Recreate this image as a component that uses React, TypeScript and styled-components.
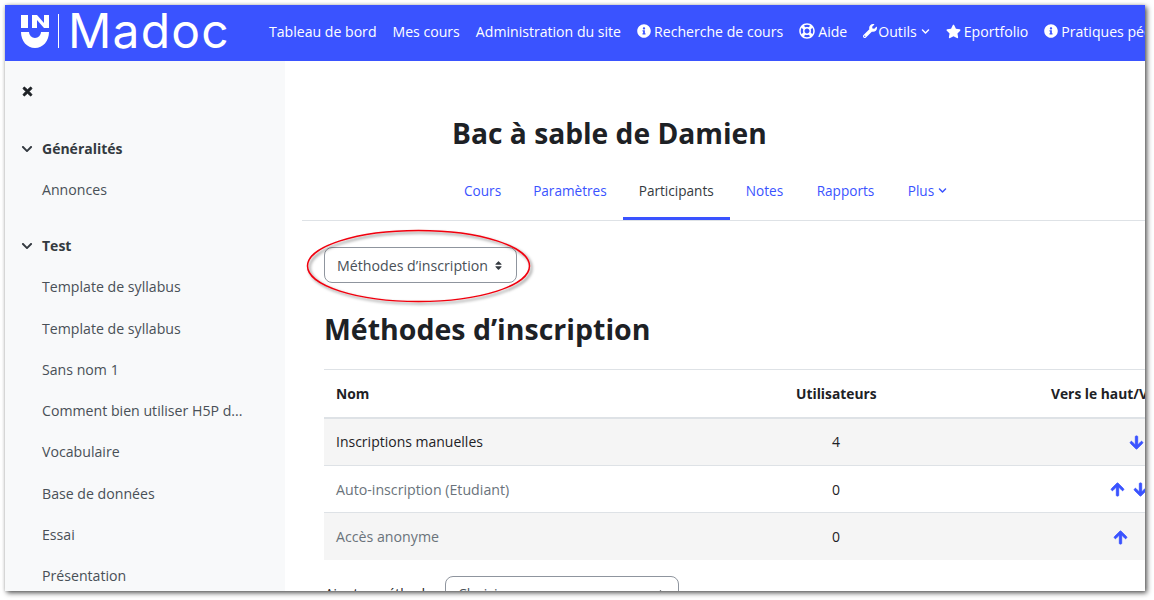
import React from "react";
import styled, { createGlobalStyle } from "styled-components";
import { FaInfoCircle, FaRegLifeRing, FaWrench, FaStar, FaChevronDown, FaTimes, FaArrowUp, FaArrowDown, FaSort } from "react-icons/fa";

const Global = createGlobalStyle`
  html, body { margin: 0; padding: 0; background: #fff; }
  body { font-family: "Open Sans", "Liberation Sans", sans-serif; font-size: 14px; color: #1d2125; overflow: hidden; height: 600px; }
`;

const Frame = styled.div`
  position: relative;
  margin: 5px 0 0 5px;
  width: 1140px;
  height: 586px;
  overflow: hidden;
  box-shadow: 2px 2px 5px rgba(0, 0, 0, 0.65), 0 0 3px rgba(0, 0, 0, 0.15);
`;
const Header = styled.header`
  height: 56px;
  background: #3a53ff;
  display: flex;
  align-items: center;
  padding: 0 0 4px 16px;
  white-space: nowrap;
  color: #fff;
  overflow: hidden;
  box-sizing: border-box;
`;
const Logo = styled.div`
  display: flex;
  align-items: center;
  width: 248px;
  flex: none;
`;
const Divider = styled.span`
  width: 1px;
  height: 34px;
  background: #fff;
  margin: 0 9px 0 9px;
  flex: none;
`;
const Wordmark = styled.span`
  font-family: "Inter", "Liberation Sans", sans-serif;
  font-weight: 400;
  font-size: 48px;
  line-height: 56px;
  letter-spacing: 1.2px;
`;
const TopLink = styled.a`
  display: inline-flex;
  align-items: center;
  gap: 3px;
  font-size: 14.1px;
  margin-right: 16px;
  color: #fff;
  flex: none;
  svg { flex: none; }
`;
const Caret = styled(FaChevronDown)`
  margin-left: 1px;
`;
const Body = styled.div`
  display: flex;
  height: 530px;
`;
const Sidebar = styled.aside`
  width: 280px;
  flex: none;
  background: #f8f9fa;
  padding: 24px 0 0 16px;
  box-sizing: border-box;
  overflow: hidden;
`;
const Close = styled.div`
  height: 43px;
  color: #1d2125;
  svg { display: block; stroke: currentColor; stroke-width: 30; }
`;
const Section = styled.div`
  display: flex;
  align-items: center;
  height: 41.25px;
  font-weight: 700;
  color: #343a40;
  font-size: 14px;
  gap: 9px;
  svg { flex: none; }
`;
const SectionGap = styled.div`
  height: 14.5px;
`;
const Item = styled.div`
  height: 41.25px;
  line-height: 41.25px;
  padding-left: 21px;
  color: #495057;
  font-size: 14.15px;
  white-space: nowrap;
`;
const Main = styled.main`
  flex: 1;
  min-width: 0;
  padding: 0 0 0 17px;
  overflow: hidden;
`;
const Title = styled.h1`
  margin: 50px 0 0 150px;
  font-size: 28.2px;
  line-height: 44px;
  font-weight: 700;
  color: #1d2125;
  white-space: nowrap;
`;
const Tabs = styled.nav`
  display: flex;
  padding-left: 146px;
  height: 65px;
  border-bottom: 1px solid #dee2e6;
`;
const Tab = styled.a<{ $active?: boolean }>`
  display: flex;
  align-items: center;
  gap: 4px;
  padding: 8px 16px 0;
  height: 65px;
  box-sizing: border-box;
  color: ${(p) => (p.$active ? "#343a40" : "#3a53ff")};
  border-bottom: 3px solid ${(p) => (p.$active ? "#3a53ff" : "transparent")};
  font-size: 13.6px;
  &:nth-child(5), &:last-child { margin-left: 1.5px; }
`;
const Selector = styled.div`
  margin: 26px 0 0 22px;
  width: 193px;
  height: 36px;
  border: 1px solid #8f959e;
  border-radius: 8px;
  box-sizing: border-box;
  display: flex;
  align-items: center;
  justify-content: space-between;
  padding: 0 12px;
  color: #495057;
  font-size: 14.2px;
  background: #fff;
  white-space: nowrap;
`;
const Heading = styled.h2`
  margin: 24px 0 0 22px;
  font-size: 28.5px;
  line-height: 44px;
  font-weight: 700;
  color: #1d2125;
`;
const Table = styled.table`
  margin: 18px 0 0 22px;
  width: 893px;
  table-layout: fixed;
  border-collapse: collapse;
  border-top: 1px solid #dee2e6;
`;
const HeadCell = styled.th<{ $center?: boolean }>`
  height: 47px;
  padding: 0 12px;
  text-align: ${(p) => (p.$center ? "center" : "left")};
  font-weight: 700;
  font-size: 13.8px;
  color: #1d2125;
  border-bottom: 2px solid #dee2e6;
  white-space: nowrap;
`;
const Row = styled.tr<{ $odd?: boolean }>`
  background: ${(p) => (p.$odd ? "#f5f5f5" : "#fff")};
  height: 47.4px;
  border-bottom: 1px solid #dee2e6;
  &:last-child { border-bottom: 0; }
`;
const Cell = styled.td<{ $center?: boolean; $dim?: boolean }>`
  padding: 0 12px;
  text-align: ${(p) => (p.$center ? "center" : "left")};
  color: ${(p) => (p.$dim ? "#6a737b" : "#1d2125")};
  font-size: ${(p) => (p.$dim ? "14.2px" : "14px")};
`;
const Arrows = styled.span<{ $tight?: boolean }>`
  display: inline-flex;
  gap: ${(p) => (p.$tight ? "2px" : "9px")};
  color: #3a53ff;
  vertical-align: middle;
  margin-bottom: 3px;
`;
const Slot = styled.span`
  display: inline-block;
  width: 14px;
  height: 14px;
  svg { display: block; margin: 0 auto; stroke: currentColor; stroke-width: 30; }
`;
const AddRow = styled.div`
  display: flex;
  align-items: flex-start;
  margin: 16px 0 0 23px;
`;
const AddLabel = styled.span`
  width: 120px;
  line-height: 36px;
  font-size: 13.6px;
  color: #1d2125;
  white-space: nowrap;
`;
const AddSelect = styled.div`
  width: 234px;
  height: 36px;
  flex: none;
  border: 1px solid #8f959e;
  border-radius: 8px;
  box-sizing: border-box;
  padding: 0 12px;
  line-height: 34px;
  color: #495057;
  display: flex;
  justify-content: space-between;
  align-items: center;
`;
const Ellipse = styled.svg`
  position: absolute;
  left: 298px;
  top: 226px;
  overflow: visible;
  pointer-events: none;
`;

const rows = [
  { name: "Inscriptions manuelles", n: 4, dim: false, up: false, down: true },
  { name: "Auto-inscription (Etudiant)", n: 0, dim: true, up: true, down: true },
  { name: "Accès anonyme", n: 0, dim: true, up: true, down: false },
];
const items = ["Template de syllabus", "Template de syllabus", "Sans nom 1", "Comment bien utiliser H5P d...", "Vocabulaire", "Base de données", "Essai", "Présentation"];

export default function App() {
  return (
    <>
      <Global />
      <Frame>
        <Header>
          <Logo>
            <svg width="28" height="36" viewBox="0 0 28 36" fill="#fff">
              <rect x="0" y="2" width="7" height="13" />
              <path d="M11 2h5l7 8V2h5v13h-5l-7-8v8h-5z" />
              <path d="M0 19h8a6 6 0 0 0 12 0h8c0 9-6 16-14 16S0 28 0 19z" />
            </svg>
            <Divider />
            <Wordmark>Madoc</Wordmark>
          </Logo>
          <TopLink>Tableau de bord</TopLink>
          <TopLink>Mes cours</TopLink>
          <TopLink>Administration du site</TopLink>
          <TopLink><FaInfoCircle size={14} />Recherche de cours</TopLink>
          <TopLink><FaRegLifeRing size={16} />Aide</TopLink>
          <TopLink><FaWrench size={14} style={{ marginRight: -2 }} />Outils <Caret size={9} /></TopLink>
          <TopLink><FaStar size={15} />Eportfolio</TopLink>
          <TopLink><FaInfoCircle size={14} />Pratiques pédagogiques</TopLink>
        </Header>
        <Body>
          <Sidebar>
            <Close><FaTimes size={13} /></Close>
            <Section><FaChevronDown size={12} />Généralités</Section>
            <Item>Annonces</Item>
            <SectionGap />
            <Section><FaChevronDown size={12} />Test</Section>
            {items.map((t, i) => <Item key={i}>{t}</Item>)}
          </Sidebar>
          <Main>
            <Title>Bac à sable de Damien</Title>
            <Tabs>
              <Tab>Cours</Tab>
              <Tab>Paramètres</Tab>
              <Tab $active>Participants</Tab>
              <Tab>Notes</Tab>
              <Tab>Rapports</Tab>
              <Tab>Plus <FaChevronDown size={9} /></Tab>
            </Tabs>
            <Selector>Méthodes d’inscription <FaSort size={11} color="#343a40" /></Selector>
            <Heading>Méthodes d’inscription</Heading>
            <Table>
              <colgroup>
                <col width="460" />
                <col width="104" />
                <col width="151" />
                <col width="178" />
              </colgroup>
              <thead>
                <tr>
                  <HeadCell>Nom</HeadCell>
                  <HeadCell $center>Utilisateurs</HeadCell>
                  <HeadCell />
                  <HeadCell $center>Vers le haut/Vers le bas</HeadCell>
                </tr>
              </thead>
              <tbody>
                {rows.map((r, i) => (
                  <Row key={r.name} $odd={i % 2 === 0}>
                    <Cell $dim={r.dim}>{r.name}</Cell>
                    <Cell $center>{r.n}</Cell>
                    <Cell />
                    <Cell $center>
                      <Arrows $tight={!(r.up && r.down)}>
                        <Slot>{r.up && <FaArrowUp size={15} />}</Slot>
                        <Slot>{r.down && <FaArrowDown size={15} />}</Slot>
                      </Arrows>
                    </Cell>
                  </Row>
                ))}
              </tbody>
            </Table>
            <AddRow>
              <AddLabel>Ajouter méthode</AddLabel>
              <AddSelect>Choisir... <FaSort size={11} color="#343a40" /></AddSelect>
            </AddRow>
          </Main>
        </Body>
        <Ellipse width="230" height="74" viewBox="0 0 230 74">
          <defs>
            <filter id="sh" x="-10%" y="-20%" width="120%" height="150%">
              <feDropShadow dx="2" dy="2" stdDeviation="1.8" floodColor="#000" floodOpacity="0.5" />
            </filter>
          </defs>
          <ellipse cx="115.5" cy="35" rx="111" ry="35.5" fill="none" stroke="#f00010" strokeWidth="1.5" filter="url(#sh)" />
        </Ellipse>
      </Frame>
    </>
  );
}
